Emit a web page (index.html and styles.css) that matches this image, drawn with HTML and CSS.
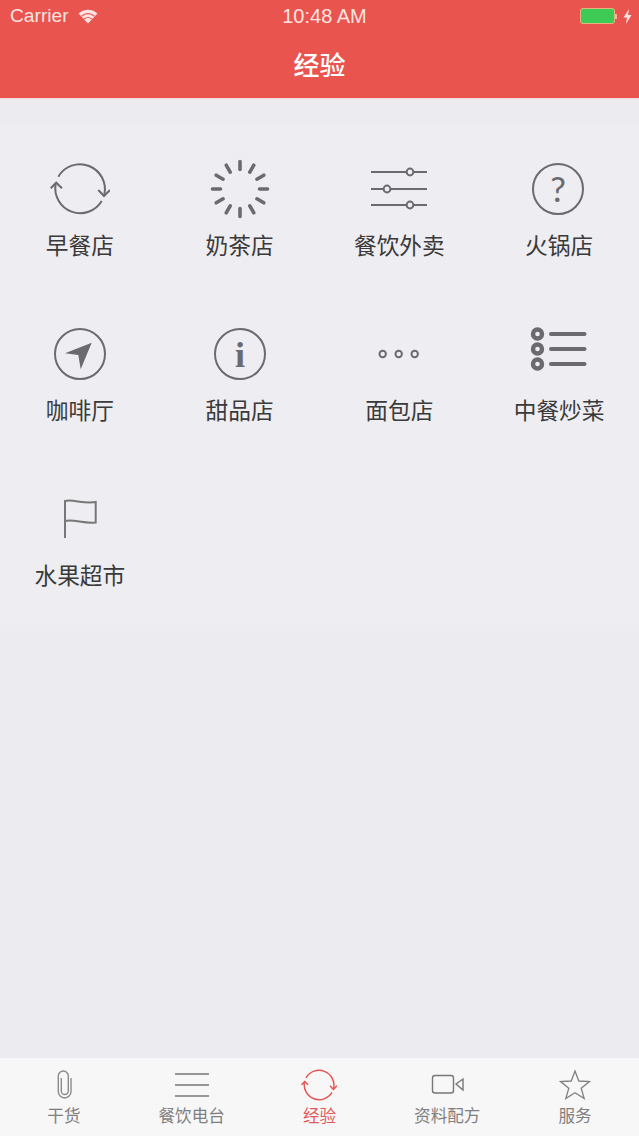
FILE: index.html
```html
<!DOCTYPE html>
<html>
<head>
    <meta charset="utf-8">
    <title>经验</title>
    <link rel="stylesheet" href="styles.css">
</head>
<body>
    <div class="phone">
        <!-- Header -->
        <header class="header">
            <div class="status">
                <div class="status_left">
                    <span>Carrier</span>
                    <svg class="wifi" width="20" height="15" viewBox="0 0 20 15">
                        <path d="M10 14.5 L0.5 4.6 A13.5 13.5 0 0 1 19.5 4.6 Z" fill="#fbe4e2"/>
                        <path d="M3.6 7.2 A9.2 9.2 0 0 1 16.4 7.2 M6.2 10 A5.6 5.6 0 0 1 13.8 10" fill="none" stroke="#e9544e" stroke-width="1.2"/>
                    </svg>
                </div>
                <div class="status_time">10:48 AM</div>
                <div class="status_right">
                    <div class="battery"></div>
                    <div class="battery_nub"></div>
                    <svg width="9" height="15" viewBox="0 0 9 15">
                        <polygon points="6,0 0.5,8.5 4,8.5 3,15 8.5,6 5,6" fill="#fbe4e2"/>
                    </svg>
                </div>
            </div>
            <div class="title">经验</div>
        </header>

        <!-- Categories -->
        <main class="content">
            <div class="grid">
                <div class="cell">
                    <svg class="icon" width="60" height="60" viewBox="0 0 60 60">
                        <path d="M8.3 17.7 A25 25 0 0 1 54.3 35.8 M5.6 25 A25 25 0 0 0 51.7 42" fill="none" stroke="#6b6a6e" stroke-width="2"/>
                        <path d="M0.7 29.3 L6.2 23.7 L12 29.3 M48.3 31 L54 37 L60 31" fill="none" stroke="#6b6a6e" stroke-width="2"/>
                    </svg>
                    <div class="label">早餐店</div>
                </div>
                <div class="cell">
                    <svg class="icon" width="60" height="60" viewBox="0 0 60 60">
                        <g stroke="#6b6a6e" stroke-width="3.6" stroke-linecap="round">
                            <line x1="30" y1="2.5" x2="30" y2="10.5"/>
                            <line x1="43.8" y1="6.2" x2="39.8" y2="13.1"/>
                            <line x1="53.8" y1="16.2" x2="46.9" y2="20.2"/>
                            <line x1="57.5" y1="30" x2="49.5" y2="30"/>
                            <line x1="53.8" y1="43.8" x2="46.9" y2="39.8"/>
                            <line x1="43.8" y1="53.8" x2="39.8" y2="46.9"/>
                            <line x1="30" y1="57.5" x2="30" y2="49.5"/>
                            <line x1="16.2" y1="53.8" x2="20.2" y2="46.9"/>
                            <line x1="6.2" y1="43.8" x2="13.1" y2="39.8"/>
                            <line x1="2.5" y1="30" x2="10.5" y2="30"/>
                            <line x1="6.2" y1="16.2" x2="13.1" y2="20.2"/>
                            <line x1="16.2" y1="6.2" x2="20.2" y2="13.1"/>
                        </g>
                    </svg>
                    <div class="label">奶茶店</div>
                </div>
                <div class="cell">
                    <svg class="icon" width="60" height="60" viewBox="0 0 60 60">
                        <g fill="none" stroke="#6b6a6e" stroke-width="2">
                            <path d="M2 13 H37 M45 13 H58 M2 30 H14 M22 30 H58 M2 46 H37 M45 46 H58"/>
                            <circle cx="41" cy="13" r="3.4"/>
                            <circle cx="18" cy="30" r="3.4"/>
                            <circle cx="41" cy="46" r="3.4"/>
                        </g>
                    </svg>
                    <div class="label">餐饮外卖</div>
                </div>
                <div class="cell">
                    <svg class="icon" width="60" height="60" viewBox="0 0 60 60">
                        <circle cx="29" cy="30" r="25" fill="none" stroke="#6b6a6e" stroke-width="2"/>
                        <text class="icon_q" x="29" y="42.7" text-anchor="middle">?</text>
                    </svg>
                    <div class="label">火锅店</div>
                </div>
                <div class="cell">
                    <svg class="icon" width="60" height="60" viewBox="0 0 60 60">
                        <circle cx="30" cy="30" r="25" fill="none" stroke="#6b6a6e" stroke-width="2"/>
                        <polygon points="41.7,18.7 15,29.3 28.3,31 30.7,45.3" fill="#6b6a6e"/>
                    </svg>
                    <div class="label">咖啡厅</div>
                </div>
                <div class="cell">
                    <svg class="icon" width="60" height="60" viewBox="0 0 60 60">
                        <circle cx="30" cy="30" r="25" fill="none" stroke="#6b6a6e" stroke-width="2"/>
                        <text class="icon_i" x="30" y="42.5" text-anchor="middle">i</text>
                    </svg>
                    <div class="label">甜品店</div>
                </div>
                <div class="cell">
                    <svg class="icon" width="60" height="60" viewBox="0 0 60 60">
                        <g fill="none" stroke="#6b6a6e" stroke-width="2">
                            <circle cx="13.7" cy="30" r="3.2"/>
                            <circle cx="29.7" cy="30" r="3.2"/>
                            <circle cx="45.7" cy="30" r="3.2"/>
                        </g>
                    </svg>
                    <div class="label">面包店</div>
                </div>
                <div class="cell">
                    <svg class="icon" width="60" height="60" viewBox="0 0 60 60">
                        <g fill="none" stroke="#6b6a6e" stroke-width="4.4">
                            <circle cx="8.5" cy="10" r="4.5"/>
                            <circle cx="8.5" cy="25" r="4.5"/>
                            <circle cx="8.5" cy="40" r="4.5"/>
                            <path d="M22 10 H55.5 M22 25 H55.5 M22 40 H55.5" stroke-width="4" stroke-linecap="round"/>
                        </g>
                    </svg>
                    <div class="label">中餐炒菜</div>
                </div>
                <div class="cell">
                    <svg class="icon" width="60" height="60" viewBox="0 0 60 60">
                        <path d="M15 49 V12 C23 10 33 15 45.7 13 V33.5 C34 35 24 30 15 32" fill="none" stroke="#777" stroke-width="2"/>
                    </svg>
                    <div class="label">水果超市</div>
                </div>
            </div>
        </main>

        <!-- Tab bar -->
        <nav class="tabbar">
            <div class="tab">
                <svg class="tab_icon" width="36" height="32" viewBox="0 0 36 32">
                    <path d="M25 9 V22.5 A6.35 6.5 0 0 1 12.3 22.5 V7 A5 5 0 0 1 22.3 7 V22 A3.5 3.5 0 0 1 15.3 22 V9" fill="none" stroke="#8b8b8e" stroke-width="1.4"/>
                </svg>
                <div class="tab_label">干货</div>
            </div>
            <div class="tab">
                <svg class="tab_icon" width="36" height="32" viewBox="0 0 36 32">
                    <path d="M1 5 H35 M1 16 H35 M1 27 H35" fill="none" stroke="#77777a" stroke-width="1.5"/>
                </svg>
                <div class="tab_label">餐饮电台</div>
            </div>
            <div class="tab tab_on">
                <svg class="tab_icon" width="36" height="32" viewBox="0 0 60 53.3">
                    <path d="M8.3 14.7 A25 25 0 0 1 54.3 32.8 M5.6 22 A25 25 0 0 0 51.7 39" fill="none" stroke="#e5534f" stroke-width="2.4"/>
                    <path d="M0.7 26.3 L6.2 20.7 L12 26.3 M48.3 28 L54 34 L60 28" fill="none" stroke="#e5534f" stroke-width="2.4"/>
                </svg>
                <div class="tab_label">经验</div>
            </div>
            <div class="tab">
                <svg class="tab_icon" width="36" height="32" viewBox="0 0 36 32">
                    <rect x="3.5" y="6.5" width="21" height="17.5" rx="2.5" fill="none" stroke="#77777a" stroke-width="1.4"/>
                    <polygon points="27,15 34,10 34,21" fill="none" stroke="#77777a" stroke-width="1.4"/>
                </svg>
                <div class="tab_label">资料配方</div>
            </div>
            <div class="tab">
                <svg class="tab_icon" width="36" height="32" viewBox="0 0 36 32">
                    <polygon points="18,2 21.8,12 32.5,12.5 24.2,19.2 27.2,29.5 18,23.7 8.8,29.5 11.8,19.2 3.5,12.5 14.2,12" fill="none" stroke="#808083" stroke-width="1.3"/>
                </svg>
                <div class="tab_label">服务</div>
            </div>
        </nav>
    </div>
</body>
</html>
```

FILE: styles.css
```css
html, body {
    margin: 0;
    padding: 0;
    background-color: #ecebf0;
}
body {
    font-family: "Liberation Sans", "Noto Sans CJK SC", sans-serif;
}
.phone {
    display: flex;
    flex-direction: column;
    width: 639px;
    height: 1136px;
    overflow: hidden;
}

/* Red header with the status bar inside */
.header {
    height: 98px;
    background-color: #e9544e;
    color: #fff;
    box-shadow: 0 1px 1px #f4d9d8;
}
.status {
    display: grid;
    grid-template-columns: 1fr auto 1fr;
    align-items: center;
    height: 32px;
    padding: 0 7px 0 10px;
    font-size: 19.2px;
    color: #fbe4e2;
}
.status_left {
    display: flex;
    align-items: center;
    gap: 9px;
}
.status_time {
    font-size: 20px;
    padding-left: 7px;
}
.status_right {
    display: flex;
    align-items: center;
    justify-content: flex-end;
}
.battery {
    width: 33px;
    height: 14px;
    background-color: #3ecb55;
    border: 1px solid #e5b57e;
    border-radius: 3px;
}
.battery_nub {
    width: 2px;
    height: 5px;
    margin-right: 6px;
    background-color: #e8b8a8;
}
.title {
    height: 66px;
    line-height: 64px;
    text-align: center;
    font-size: 26px;
    font-weight: 500;
    font-family: "Noto Sans CJK SC", sans-serif;
}

/* Category grid */
.content {
    flex: 1;
    padding-top: 27px;
}
.grid {
    display: grid;
    grid-template-columns: repeat(4, 1fr);
    padding-bottom: 5px;
    background-color: #eeedf1;
}
.cell {
    display: flex;
    flex-direction: column;
    align-items: center;
    height: 131px;
    padding-top: 34px;
}
.icon {
    display: block;
}
.icon_q {
    font-family: "Lato", sans-serif;
    font-size: 35px;
    fill: #6b6a6e;
}
.icon_i {
    font-family: "Liberation Serif", serif;
    font-weight: 700;
    font-size: 36px;
    fill: #6b6a6e;
}
.label {
    margin-top: 11px;
    line-height: 30px;
    font-size: 22.7px;
    font-family: "Noto Sans CJK SC", sans-serif;
    color: #3a3a3a;
    white-space: nowrap;
}

/* Bottom tabs */
.tabbar {
    display: grid;
    grid-template-columns: repeat(5, 1fr);
    height: 78px;
    background-color: #f7f7f7;
}
.tab {
    display: flex;
    flex-direction: column;
    align-items: center;
    padding-top: 11px;
}
.tab_icon {
    display: block;
}
.tab_label {
    margin-top: 3px;
    line-height: 22px;
    font-size: 16.6px;
    font-family: "Noto Sans CJK SC", sans-serif;
    color: #7f7f82;
    white-space: nowrap;
}
.tab_on .tab_label {
    color: #e0595a;
}
```
